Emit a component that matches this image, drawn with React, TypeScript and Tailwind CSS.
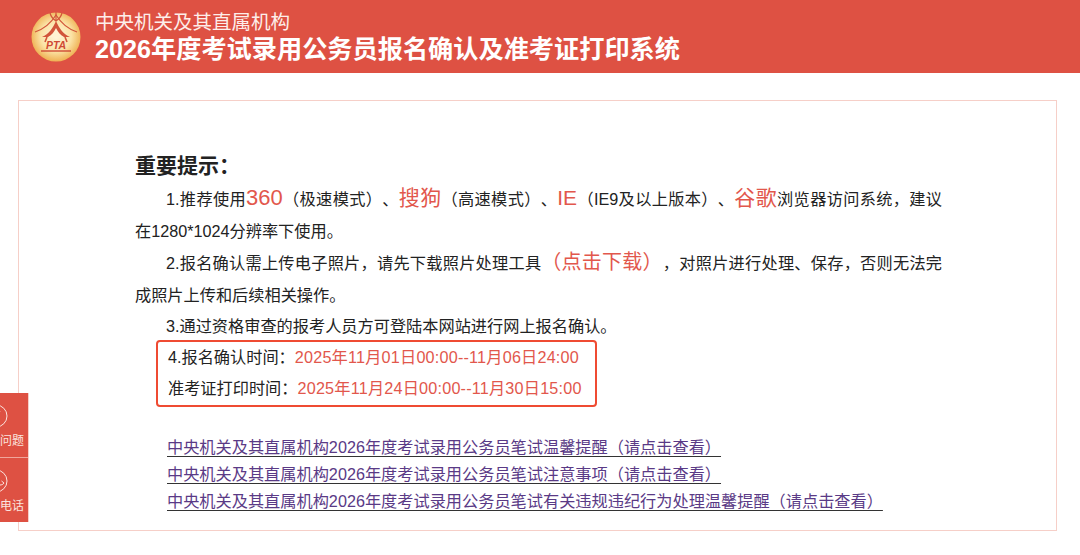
const cjk = "font-['Liberation_Sans','Noto_Sans_CJK_SC',sans-serif]"

function Logo() {
  return (
    <svg width="50" height="50" viewBox="0 0 50 50" className="shrink-0">
      <defs>
        <radialGradient id="g" cx="50%" cy="48%" r="52%">
          <stop offset="0%" stopColor="#fff6dc" />
          <stop offset="60%" stopColor="#fbe3a6" />
          <stop offset="100%" stopColor="#efb153" />
        </radialGradient>
      </defs>
      <circle cx="25" cy="25" r="24.5" fill="url(#g)" />
      <path d="M25 0v8M19 1c1 4 3 6 6 8 3-2 5-4 6-8" stroke="#d2553a" strokeWidth="1.200" fill="none" />
      <path d="M4 20c9-3 16-9 21-17 5 8 12 14 21 17" stroke="#d2553a" strokeWidth="1.200" fill="none" />
      <path d="M11 25c7-3 11-9 14-16 3 7 7 13 14 16z" fill="#d2553a" />
      <path d="M17 25c4-2 6-5 8-9 2 4 4 7 8 9z" fill="#fff3d2" />
      <path d="M16 25l-2 5M34 25l2 5" stroke="#d2553a" strokeWidth="1.600" fill="none" />
      <text x="25" y="37" textAnchor="middle" fontSize="10.5" fontWeight="700" fontStyle="italic" fill="#cf4a34" fontFamily="Liberation Sans">PTA</text>
      <path d="M10 39h30" stroke="#cf4a34" strokeWidth="1.400" />
    </svg>
  )
}

function SideItem({ label, phone }: { label: string; phone?: boolean }) {
  return (
    <div className="flex h-[64.5px] flex-col items-start justify-start">
      <svg width="8" height="24" viewBox="0 0 8 24" fill="none" stroke="#fbe4df" strokeWidth="1" className="mt-[11px]">
        <circle cx="-4" cy="12" r="11" />
        {phone ? <path d="M0 16c1.500 0 3-.5 4-2l-2.500-2" /> : <path d="M-1 9c1-1 1-2 0-3" />}
      </svg>
      <div className="mt-[5px] whitespace-nowrap text-[12px] leading-4 text-[#fbe4df]">{label}</div>
    </div>
  )
}

export default function App() {
  const p = "text-[16.2px] leading-[31.6px] text-[#222] [text-spacing-trim:space-all]"
  const row = "text-[16.2px] leading-[31px] text-[#222] [text-spacing-trim:space-all]"
  const red = "text-[#e2574c] tracking-[0.2px]"
  const big = "text-[21px] leading-none text-[#e2574c]"
  const link = "block text-[16.2px] leading-[23px] text-[#5a3a86] underline underline-offset-[3px] decoration-[#333] [text-spacing-trim:space-all]"
  return (
    <div className={`relative h-[555px] w-[1080px] overflow-hidden bg-white ${cjk}`}>
      <header className="flex h-[73px] items-center gap-[14px] bg-[#de5143] pl-[31px] text-white">
        <Logo />
        <div>
          <div className="text-[19.5px] leading-[24px] text-[#fdeeea]">中央机关及其直属机构</div>
          <div className="text-[25.2px] font-bold leading-[30px]">2026年度考试录用公务员报名确认及准考证打印系统</div>
        </div>
      </header>

      <main className="ml-[18px] mt-[27px] h-[431px] w-[1039px] border border-[#f6cfc8] pl-[116px] pr-[114px] pt-[50px]">
        <h2 className="text-[21px] font-bold leading-[30px] text-[#222]">重要提示：</h2>
        <p className={`${p} mt-[3px] text-justify indent-[31px]`}>
          1.推荐使用<span className={`${big} text-[22px]`}>360</span>（极速模式）、<span className={big}>搜狗</span>（高速模式）、
          <span className={big}>IE</span>（IE9及以上版本）、<span className={big}>谷歌</span>浏览器访问系统，建议在1280*1024分辨率下使用。
        </p>
        <p className={`${p} mt-[1px] text-justify indent-[31px]`}>
          2.报名确认需上传电子照片，请先下载照片处理工具<span className="text-[20px] leading-none text-[#e2574c]">（点击下载）</span>，对照片进行处理、保存，否则无法完成照片上传和后续相关操作。
        </p>
        <p className={`${p} indent-[31px]`}>3.通过资格审查的报考人员方可登陆本网站进行网上报名确认。</p>
        <div className="ml-[21px] mt-[-3px] w-[441px] rounded-[4px] border-[2px] border-[#ef4b32] pb-[1px] pl-[10px]">
          <div className={row}>
            4.报名确认时间：<span className={red}>2025年11月01日00:00--11月06日24:00</span>
          </div>
          <div className={row}>
            准考证打印时间：<span className={red}>2025年11月24日00:00--11月30日15:00</span>
          </div>
        </div>
        <div className="ml-[32px] mt-[29px]">
          <a className={link}>中央机关及其直属机构2026年度考试录用公务员笔试温馨提醒（请点击查看）</a>
          <a className={`${link} mt-[4px]`}>中央机关及其直属机构2026年度考试录用公务员笔试注意事项（请点击查看）</a>
          <a className={`${link} mt-[4px]`}>中央机关及其直属机构2026年度考试录用公务员笔试有关违规违纪行为处理温馨提醒（请点击查看）</a>
        </div>
      </main>

      <aside className="absolute left-0 top-[393px] w-[29px] divide-y divide-[#f0a69c] overflow-hidden border-r border-[#f6cfc8] bg-[#de5143]">
        <SideItem label="问题" />
        <SideItem label="电话" phone />
      </aside>
    </div>
  )
}
